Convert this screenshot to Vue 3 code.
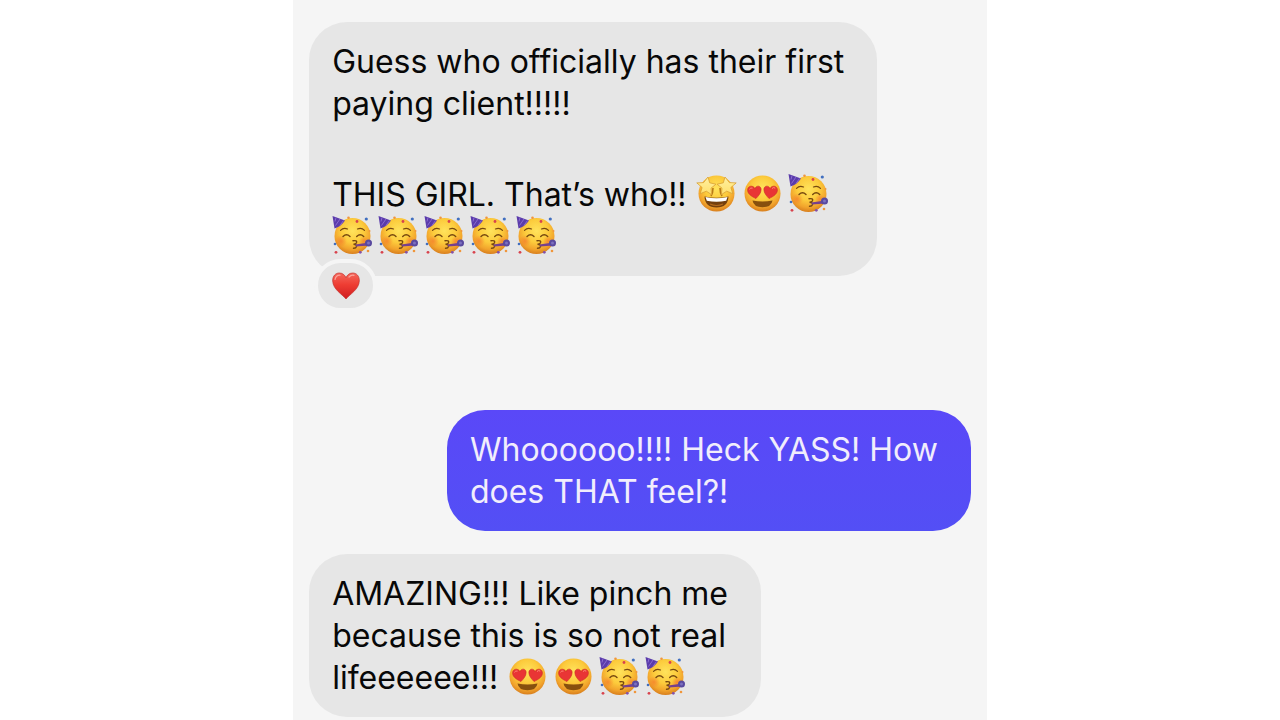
<script setup>
import { ref } from "vue";

// every line is a list of parts, { e } is an emoji symbol
const star = { e: "star-eyes", label: "🤩" };
const heart = { e: "heart-eyes", label: "😍" };
const party = { e: "party", label: "🥳" };

const messages = ref([
  {
    from: "them",
    reaction: true,
    paragraphs: [
      [["Guess who officially has their first"], ["paying client!!!!!"]],
      [
        ["THIS GIRL. That’s who!! ", star, heart, party],
        [party, party, party, party, party],
      ],
    ],
  },
  {
    from: "me",
    paragraphs: [[["Whoooooo!!!! Heck YASS! How"], ["does THAT feel?!"]]],
  },
  {
    from: "them",
    paragraphs: [
      [
        ["AMAZING!!! Like pinch me"],
        ["because this is so not real"],
        ["lifeeeeee!!! ", heart, heart, party, party],
      ],
    ],
  },
]);
</script>

<template>
  <svg class="defs" aria-hidden="true">
    <defs>
      <radialGradient id="face" cx="50%" cy="36%" r="64%">
        <stop offset="0" stop-color="#ffe35c" />
        <stop offset="0.5" stop-color="#fccb3c" />
        <stop offset="0.8" stop-color="#f2a42c" />
        <stop offset="1" stop-color="#d87f1e" />
      </radialGradient>
      <linearGradient id="starFill" x1="0" y1="0" x2="0" y2="1">
        <stop offset="0" stop-color="#fff0a0" />
        <stop offset="1" stop-color="#ffe06c" />
      </linearGradient>
      <radialGradient id="blush">
        <stop offset="0" stop-color="#f4702a" stop-opacity="0.6" />
        <stop offset="1" stop-color="#f4702a" stop-opacity="0" />
      </radialGradient>
      <linearGradient id="redHeart" x1="0" y1="0" x2="0" y2="1">
        <stop offset="0" stop-color="#f4675c" />
        <stop offset="0.45" stop-color="#ee3d33" />
        <stop offset="1" stop-color="#cf1d20" />
      </linearGradient>
    </defs>

    <symbol id="star-eyes" viewBox="0 0 46 42">
      <circle cx="20.500" cy="19.500" r="18" fill="url(#face)" />
      <path d="M17 14q0 5-2 8M24 14q0 5 2 8" fill="none" stroke="#b87a18" stroke-width="1.600" />
      <path d="M8.500 22.500q12 2.500 24 0q-.5 11-12 11T8.500 22.500z" fill="#74400e" />
      <path d="M9.500 23q11 2.500 22 0l-1.300 3.800q-9.700 2-19.400 0z" fill="#fff" />
      <path d="M14 30q6.500 3 13 0" fill="none" stroke="#b46b1e" stroke-width="1.200" />
      <g fill="url(#starFill)" stroke="#d99f34" stroke-width="0.8" stroke-linejoin="round">
        <path d="M12 3l1.700 5.800 6.200 1.400-4.900 4 .7 6.500-5.400-3.500-6.100 2.500 1.900-6.200L.8 8.900l6.800-.3z" />
        <path d="M29 3l-1.700 5.800-6.200 1.400 4.900 4-.7 6.500 5.400-3.500 6.100 2.500-1.900-6.200 5.300-4.600-6.800-.3z" />
      </g>
    </symbol>

    <symbol id="heart-eyes" viewBox="0 0 46 42">
      <circle cx="20.500" cy="19.500" r="18" fill="url(#face)" />
      <path d="M10.500 26.500q10 2.200 20 0q-1 6.700-10 6.700T10.500 26.500z" fill="#87500e" />
      <g fill="#e93535" stroke="#c92724" stroke-width="0.6">
        <path d="M14 24.500C9 22.300 5.800 19.700 5.600 16.300C5.400 11.700 11 10.700 13 14.600C14.300 10.900 19.400 11.500 19.100 15.800C18.900 19.200 16.700 21.600 14 24.500z" />
        <path d="M27 24.500C32 22.300 35.200 19.700 35.400 16.300C35.600 11.700 30 10.700 28 14.600C26.700 10.900 21.600 11.500 21.900 15.800C22.100 19.200 24.300 21.600 27 24.500z" />
      </g>
      <path d="M7.600 15q1-1.600 2.600-1M30.300 14.200q1.200-1.300 2.600-.3" fill="none" stroke="#ff8a78" stroke-width="1" stroke-linecap="round" />
    </symbol>

    <symbol id="party" viewBox="0 0 46 42">
      <circle cx="20.500" cy="20" r="18" fill="url(#face)" />
      <circle cx="9" cy="25" r="6" fill="url(#blush)" />
      <circle cx="32" cy="25" r="5" fill="url(#blush)" />
      <path d="M.5 0L13 4.500Q9 10.500 2.500 12.500z" fill="#5b3cab" />
      <path d="M4 1.500l-1 4M8 3L3.500 9.500M11.500 4.500L8 9.500" stroke="#8a6bd0" stroke-width="1" fill="none" />
      <g fill="none" stroke="#76480f" stroke-linecap="round">
        <path d="M8.500 14.300q3-3 7-1.300M25.500 13q4-1.700 7 1.300" stroke-width="1.200" />
        <path d="M11 20.500q3.500-3.400 7 0M24.700 20.500q3.500-3.400 7 0" stroke-width="1.400" />
        <path d="M21 24.700q4.500-.5 3.500 2q-.7 1.500-3 1.600q3.500.2 3 2.200q-.5 1.800-3 1.700" stroke-width="1.400" />
      </g>
      <path d="M23.500 28.500L37 26.500v3L24 30.500z" fill="#77408d" />
      <circle cx="36.500" cy="27" r="3.500" fill="#59499f" />
      <circle cx="36.500" cy="27" r="1.500" fill="#7c70c0" />
      <g fill="#d8434d">
        <circle cx="25" cy="5.500" r="1.400" />
        <circle cx="4" cy="36.300" r="1.400" />
      </g>
      <g fill="#416fc0">
        <circle cx="34.300" cy="3" r="1.600" />
        <circle cx="3" cy="28" r="1.300" />
      </g>
      <g fill="#f0963c">
        <circle cx="16.500" cy="1.800" r="1.300" />
        <circle cx="36" cy="35" r="1.300" />
        <circle cx="37.500" cy="15" r="1" />
      </g>
      <circle cx="28.300" cy="36.300" r="1.400" fill="#8452a9" />
    </symbol>
  </svg>

  <main class="chat">
    <article
      v-for="(message, i) in messages"
      :key="i"
      class="bubble"
      :class="[message.from, { reacted: message.reaction }]"
    >
      <p v-for="(lines, j) in message.paragraphs" :key="j">
        <span v-for="(line, k) in lines" :key="k" class="line">
          <template v-for="(part, n) in line" :key="n">
            <svg v-if="part.e" class="emoji" role="img" :aria-label="part.label">
              <use :href="'#' + part.e" />
            </svg>
            <template v-else>{{ part }}</template>
          </template>
        </span>
      </p>
      <button v-if="message.reaction" type="button" class="reaction" aria-label="Loved">
        <svg viewBox="0 0 28 28">
          <path
            d="M14 27C10.500 22.500 1 17.500 .7 9C.5 4 3.500 1 7.300 1C10.500 1 13 3 14 5.800C15 3 17.500 1 20.700 1C24.500 1 27.500 4 27.300 9C27 17.500 17.500 22.500 14 27z"
            fill="url(#redHeart)"
            stroke="#c4302b"
            stroke-width="0.7"
          />
          <path d="M3 7.500Q4 3 8 3.200M17 5q2-2.300 5-1.700" fill="none" stroke="#fba39a" stroke-width="1.200" stroke-linecap="round" />
        </svg>
      </button>
    </article>
  </main>
</template>

<style>
body {
  margin: 0;
  background: #fff;
}
</style>

<style scoped>
.defs {
  position: absolute;
  width: 0;
  height: 0;
}
.chat {
  box-sizing: border-box;
  display: flex;
  flex-direction: column;
  align-items: flex-start;
  gap: 23px;
  width: 54.2%;
  min-width: 600px;
  min-height: 100vh;
  margin: 0 auto;
  padding: 22px 16px 3px;
  background: #f5f5f5;
  font-family: Inter, "Liberation Sans", sans-serif;
  font-size: 32px;
  line-height: 42px;
}
.bubble {
  position: relative;
  padding: 19px 33px 18px 23px;
  border-radius: 38px;
  background: #e6e6e6;
  color: #080808;
}
.bubble.me {
  align-self: flex-end;
  background: linear-gradient(#5a48f8, #534ff5);
  color: #f1edfc;
}
.reacted {
  margin-bottom: 111px;
}
p {
  margin: 0;
}
p + p {
  margin-top: 49px;
}
.line {
  display: block;
  white-space: pre;
}
.emoji {
  width: 46px;
  height: 42px;
  vertical-align: top;
}
.reaction {
  position: absolute;
  left: 5px;
  bottom: -36px;
  display: flex;
  align-items: center;
  justify-content: center;
  width: 63px;
  height: 53px;
  padding: 0;
  border: 4px solid #f5f5f5;
  border-radius: 27px;
  background: #e6e6e6;
  cursor: pointer;
}
.reaction svg {
  width: 28px;
  height: 28px;
}
</style>
